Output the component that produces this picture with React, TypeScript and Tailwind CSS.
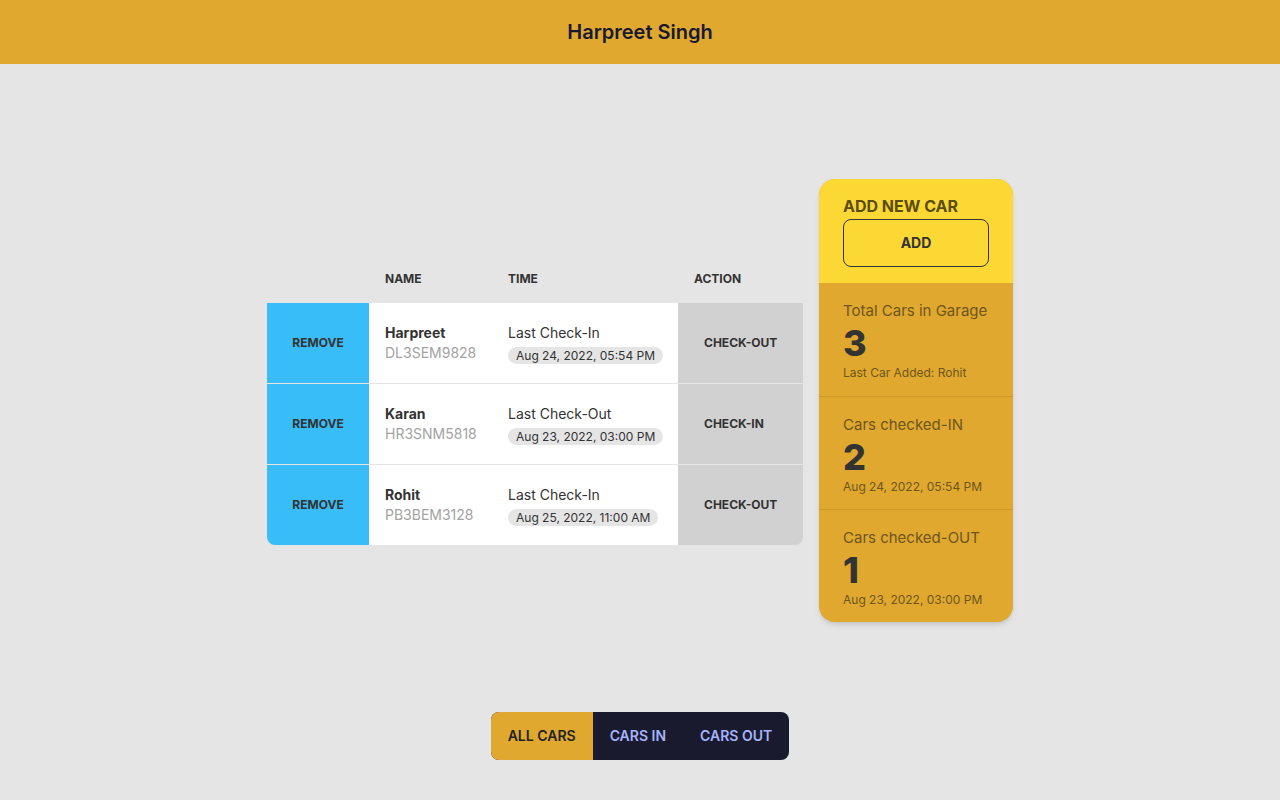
import type { ReactNode } from "react";

type Car = {
  name: string;
  plate: string;
  label: string;
  time: string;
  action: string;
};

const cars: Car[] = [
  { name: "Harpreet", plate: "DL3SEM9828", label: "Last Check-In", time: "Aug 24, 2022, 05:54 PM", action: "CHECK-OUT" },
  { name: "Karan", plate: "HR3SNM5818", label: "Last Check-Out", time: "Aug 23, 2022, 03:00 PM", action: "CHECK-IN" },
  { name: "Rohit", plate: "PB3BEM3128", label: "Last Check-In", time: "Aug 25, 2022, 11:00 AM", action: "CHECK-OUT" },
];

export default function App() {
  return (
    <div className="min-h-screen bg-[#e5e5e5] font-['Inter',sans-serif] text-[#333]">
      <header className="flex h-16 items-center justify-center bg-[#e0a82e]">
        <h1 className="text-xl font-semibold text-[#181830]">Harpreet Singh</h1>
      </header>

      <main className="flex items-start justify-center gap-4 pt-[115px]">
        <CarTable />
        <StatsCard />
      </main>

      <div className="mt-[90px] flex justify-center">
        <div className="flex h-12 overflow-hidden rounded-lg bg-[#1a1a2e] text-sm font-semibold">
          <button className="bg-[#e0a82e] px-[17px] text-[#222]">ALL CARS</button>
          <button className="px-[17px] text-[#a5b4fc]">CARS IN</button>
          <button className="px-[17px] text-[#a5b4fc]">CARS OUT</button>
        </div>
      </div>
    </div>
  );
}

function CarTable() {
  return (
    <div className="mt-[86px] w-[536px]">
      <div className="flex h-[38px] items-start pt-[6px] text-xs font-bold">
        <div className="w-[102px]" />
        <div className="w-[124px] pl-4">NAME</div>
        <div className="w-[185px] pl-[15px]">TIME</div>
        <div className="w-[125px] pl-4">ACTION</div>
      </div>
      <div className="overflow-hidden rounded-b-lg">
        {cars.map((car, i) => (
          <div key={car.plate} className={`flex ${i > 0 ? "h-[81px] border-t border-[#e5e5e5]" : "h-[80px]"}`}>
            <div className="flex w-[102px] items-center justify-center bg-[#38bdf8] text-xs font-bold">REMOVE</div>
            <div className="flex w-[124px] flex-col justify-center bg-white pl-4">
              <span className="text-sm font-bold">{car.name}</span>
              <span className="text-sm text-[#a3a3a3]">{car.plate}</span>
            </div>
            <div className="flex w-[185px] flex-col justify-center gap-1 bg-white pl-[15px]">
              <span className="text-sm">{car.label}</span>
              <span className="w-fit rounded-full bg-[#e5e5e5] px-2 text-xs leading-[17px]">{car.time}</span>
            </div>
            <div className="flex w-[125px] items-center bg-[#d1d1d1] pl-[26px] text-xs font-bold">{car.action}</div>
          </div>
        ))}
      </div>
    </div>
  );
}

function StatsCard() {
  return (
    <div className="w-[194px] overflow-hidden rounded-2xl bg-[#e0a82e] shadow-md">
      <div className="bg-[#fcd834] px-6 pb-4 pt-[17px]">
        <div className="text-base font-bold leading-5 text-[#5a4c0c]">ADD NEW CAR</div>
        <button className="mt-[3px] h-12 w-full rounded-lg border border-[#333] text-sm font-bold">ADD</button>
      </div>
      <Stat label="Total Cars in Garage" value="3" sub="Last Car Added: Rohit" />
      <Stat label="Cars checked-IN" value="2" sub="Aug 24, 2022, 05:54 PM" divider />
      <Stat label="Cars checked-OUT" value="1" sub="Aug 23, 2022, 03:00 PM" divider />
    </div>
  );
}

function Stat({ label, value, sub, divider }: { label: string; value: ReactNode; sub: string; divider?: boolean }) {
  return (
    <div className={`h-[113px] px-6 pt-4 ${divider ? "border-t border-[#cf9a28]" : ""}`}>
      <div className="whitespace-nowrap text-[15px] leading-6 text-[#6e5620]">{label}</div>
      <div className="text-4xl font-extrabold leading-10 text-[#333]">{value}</div>
      <div className="mt-[2px] whitespace-nowrap text-xs leading-4 text-[#6e5620]">{sub}</div>
    </div>
  );
}
